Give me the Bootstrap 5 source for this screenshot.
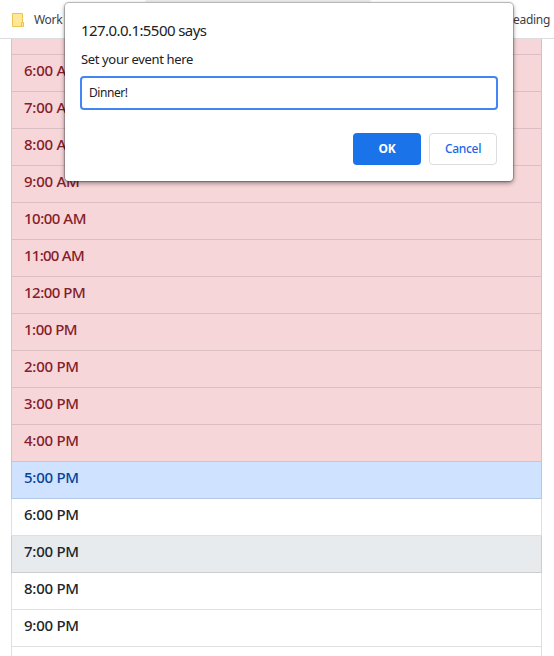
<!DOCTYPE html>
<html lang="en">
<head>
<meta charset="utf-8">
<meta name="viewport" content="width=device-width, initial-scale=1">
<title>Day planner</title>
<link rel="stylesheet" href="https://cdn.jsdelivr.net/npm/bootstrap@5.3.0/dist/css/bootstrap.min.css">
<style>
body { font-family: "Noto Sans", "Open Sans", sans-serif; height: 656px; background: #fff; }
.bookmarks { height: 39px; border-bottom: 1px solid #dadce0; font-size: 12px; letter-spacing: -.3px; color: #3c4043; padding: 2px 4px 0 11px; }
.bookmarks svg { margin-right: 10px; }
.tab-edge { top: 0; left: 145px; width: 226px; height: 2px; background: #ececee; border-radius: 0 0 4px 4px; }
.planner { height: 617px; padding: 0 12px 0 11px; }
.hours { --bs-list-group-border-radius: 0; --bs-list-group-border-color: #dfdfdf; margin-top: -21px; font-size: 15px; font-weight: 500; letter-spacing: -.25px; }
.hours .list-group-item { height: 37px; padding: 3px 12px 0; line-height: 24px; color: #212529; border-color: #dfdfdf; }
.hours .past { background: #f6d6d9; color: #842029; border-color: #dbbec2; }
.hours .now { background: #cfe2ff; color: #084298; border-color: #b3c8e6; }
.hours .hovered { background: #e7ebee; border-color: #caced1; }
.hours .narrow { letter-spacing: -.5px; }
.hours .narrower { letter-spacing: -.75px; }
.prompt { top: 3px; left: 65px; width: 448px; height: 178px; padding: 16px 16px 16px; background: #fff; border-radius: 4px; box-shadow: 0 0 1px 1px rgba(0,0,0,.25), 0 2px 5px rgba(0,0,0,.45); color: #202124; }
.prompt h1 { font-size: 15px; line-height: 22px; font-weight: 400; letter-spacing: -.57px; margin: 0 0 9px; }
.prompt label { font-size: 13px; line-height: 18px; letter-spacing: -.36px; margin-bottom: 8px; }
.prompt .form-control { height: 34px; width: 418px; margin-left: -1px; padding: 0 7px 2px; font-size: 12px; letter-spacing: -.45px; color: #202124; border: 2px solid #4285f4; border-radius: 4px; box-shadow: none; }
.prompt .btn { width: 68px; height: 32px; padding: 0; font-size: 12px; border-radius: 4px; letter-spacing: -.3px; }
.prompt .btn-ok { background: #1a73e8; color: #fff; font-weight: 700; }
.prompt .btn-cancel { background: #fff; border: 1px solid #dadce0; color: #1a67e8; font-weight: 500; }
</style>
</head>
<body class="overflow-hidden position-relative">
<header class="bookmarks d-flex align-items-center">
  <svg width="13" height="14" viewBox="0 0 13 14"><path d="M1.500.5h10v9h1v4h-11z" fill="#ffe799" stroke="#e9c74c"/><path d="M10.500 13V9.500H12.500" fill="none" stroke="#e9c74c"/></svg>
  <span>Work</span>
  <span class="ms-auto">Reading</span>
</header>
<div class="tab-edge position-absolute"></div>
<main class="planner overflow-hidden">
  <ul class="list-group hours">
    <li class="list-group-item past"></li>
    <li class="list-group-item past">6:00 AM</li>
    <li class="list-group-item past">7:00 AM</li>
    <li class="list-group-item past">8:00 AM</li>
    <li class="list-group-item past">9:00 AM</li>
    <li class="list-group-item past narrow">10:00 AM</li>
    <li class="list-group-item past narrower">11:00 AM</li>
    <li class="list-group-item past narrow">12:00 PM</li>
    <li class="list-group-item past narrow">1:00 PM</li>
    <li class="list-group-item past">2:00 PM</li>
    <li class="list-group-item past">3:00 PM</li>
    <li class="list-group-item past">4:00 PM</li>
    <li class="list-group-item now">5:00 PM</li>
    <li class="list-group-item">6:00 PM</li>
    <li class="list-group-item hovered">7:00 PM</li>
    <li class="list-group-item">8:00 PM</li>
    <li class="list-group-item">9:00 PM</li>
    <li class="list-group-item"></li>
  </ul>
</main>
<form class="prompt position-absolute d-flex flex-column" role="dialog">
  <h1>127.0.0.1:5500 says</h1>
  <label for="event">Set your event here</label>
  <input id="event" class="form-control" type="text" value="Dinner!">
  <div class="d-flex justify-content-end gap-2 mt-auto">
    <button type="button" class="btn btn-ok">OK</button>
    <button type="button" class="btn btn-cancel">Cancel</button>
  </div>
</form>
<script src="https://cdn.jsdelivr.net/npm/bootstrap@5.3.0/dist/js/bootstrap.bundle.min.js"></script>
</body>
</html>
